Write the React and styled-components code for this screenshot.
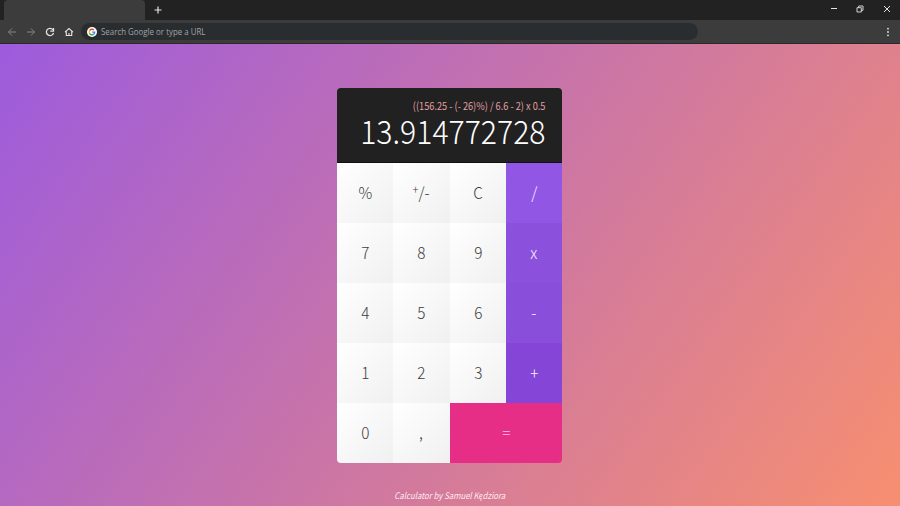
import React from "react";
import styled, { createGlobalStyle } from "styled-components";

const GlobalStyle = createGlobalStyle`
  * { box-sizing: border-box; }
  body { margin: 0; overflow: hidden; }
  button { font: inherit; border: 0; padding: 0; margin: 0; background: none; color: inherit; }
`;

const Browser = styled.div`
  display: flex;
  flex-direction: column;
  width: 900px;
  height: 506px;
  font-family: "Noto Sans CJK SC", "Noto Sans", sans-serif;
`;

const TitleBar = styled.header`
  display: flex;
  height: 20px;
  padding-left: 4px;
  background: #222;
`;

const Tab = styled.div`
  width: 141px;
  height: 20px;
  border-radius: 4px 4px 0 0;
  background: #3c3c3c;
`;

const NewTab = styled.button`
  display: flex;
  align-items: center;
  justify-content: center;
  width: 25px;
  height: 20px;
`;

const WindowControls = styled.div`
  display: flex;
  margin-left: auto;
`;

const WindowButton = styled.button`
  display: flex;
  align-items: center;
  justify-content: center;
  width: 26.6px;
  height: 18px;
`;

const Toolbar = styled.div`
  display: flex;
  align-items: center;
  height: 24px;
  padding: 0 3px 0 2px;
  background: #3c3c3c;
  border-bottom: 1px solid #2b292c;
`;

const ToolButton = styled.button`
  display: flex;
  align-items: center;
  justify-content: center;
  width: 19px;
  height: 20px;
`;

const AddressBar = styled.div`
  display: flex;
  align-items: center;
  gap: 4px;
  width: 617px;
  height: 17px;
  margin-left: 3px;
  padding-left: 6px;
  border-radius: 9px;
  background: #292d30;
`;

const AddressText = styled.span`
  color: #a0a4a7;
  font: 9.3px/17px "Open Sans", "Noto Sans", sans-serif;
  white-space: nowrap;
  transform: scaleX(0.85);
  transform-origin: left center;
`;

const MenuButton = styled(ToolButton)`
  margin-left: auto;
`;

const Page = styled.main`
  display: flex;
  flex-direction: column;
  align-items: center;
  flex: 1;
  padding: 44px 1px 0 0;
  background: linear-gradient(125deg, #9d5bdd 0%, #f78f70 100%);
`;

const Calculator = styled.section`
  width: 225px;
  height: 375px;
  border-radius: 4px;
  overflow: hidden;
`;

const Display = styled.div`
  display: flex;
  flex-direction: column;
  align-items: flex-end;
  height: 75px;
  padding: 9px 17px 0 0;
  background: #212121;
  border-bottom: 1px solid #101010;
`;

const Expression = styled.div`
  color: #e2a0a4;
  font-size: 10.6px;
  line-height: 17px;
  white-space: nowrap;
  transform: scaleX(0.87);
  transform-origin: right center;
`;

const Result = styled.div`
  color: #fff;
  font-size: 33px;
  font-weight: 300;
  line-height: 32px;
  transform: scaleX(0.915);
  transform-origin: right center;
`;

const Keypad = styled.div`
  display: grid;
  grid-template-columns: 56px 57px 56px 56px;
  grid-auto-rows: 60px;
`;

const Key = styled.button`
  display: flex;
  align-items: center;
  justify-content: center;
  padding-bottom: 2px;
  color: #3c3c3c;
  font-size: 16.3px;
  font-weight: 300;
  background: linear-gradient(135deg, #fff, #f0f0f0);
`;

const OperatorKey = styled(Key)`
  color: #fbf2ff;
  background: ${(p) => p.$shade};
`;

const EqualsKey = styled(Key)`
  grid-column: span 2;
  color: #fbc4e0;
  background: #e72e87;
`;

const KeyLabel = styled.span`
  display: flex;
  align-items: center;
  transform: scaleX(0.94);
`;

const Raised = styled.span`
  font-size: 12px;
  line-height: 10px;
  margin-bottom: 7px;
`;

const Credit = styled.footer`
  margin-top: 26px;
  color: #fdeaf0;
  font-size: 9px;
  line-height: 14px;
  font-style: italic;
  white-space: nowrap;
  transform: scaleX(0.87);
`;

function Stroke({ d, size = 10, color = "#e4e4e4", width = 1 }) {
  return (
    <svg width={size} height={size} viewBox="0 0 10 10" fill="none" stroke={color} strokeWidth={width}>
      <path d={d} />
    </svg>
  );
}

function GoogleLogo() {
  return (
    <svg width="10" height="10" viewBox="0 0 20 20" fill="none" strokeWidth="2.8">
      <circle cx="10" cy="10" r="10" fill="#fff" />
      <path d="M13.8 6.2A5.4 5.4 0 0 0 5.2 7.4" stroke="#ea4335" />
      <path d="M5.2 7.4a5.4 5.4 0 0 0 0 5.2" stroke="#fbbc05" />
      <path d="M5.2 12.6a5.4 5.4 0 0 0 8.5 1.4" stroke="#34a853" />
      <path d="M13.7 14a5.4 5.4 0 0 0 1.7-3.7H10.2" stroke="#4285f4" />
    </svg>
  );
}

const rows = [
  { keys: ["%", "±", "C"], operator: "/", shade: "#9157e4" },
  { keys: ["7", "8", "9"], operator: "x", shade: "#8b50dc" },
  { keys: ["4", "5", "6"], operator: "-", shade: "#8a4fda" },
  { keys: ["1", "2", "3"], operator: "+", shade: "#8546d7" },
];

export default function App() {
  return (
    <Browser>
      <GlobalStyle />
      <TitleBar>
        <Tab />
        <NewTab aria-label="New tab"><Stroke d="M5 1.5v7M1.5 5h7" width={1.2} /></NewTab>
        <WindowControls>
          <WindowButton aria-label="Minimize"><Stroke d="M2 4.5h6" /></WindowButton>
          <WindowButton aria-label="Restore"><Stroke d="M2 3.7h4.3v4.3H2zM3.7 3.7V2H8v4.3H6.3" width={0.9} /></WindowButton>
          <WindowButton aria-label="Close"><Stroke d="M2 2l6 6M8 2L2 8" /></WindowButton>
        </WindowControls>
      </TitleBar>
      <Toolbar>
        <ToolButton aria-label="Back"><Stroke d="M9 5H1.5M5 1.5L1.5 5 5 8.5" color="#858585" /></ToolButton>
        <ToolButton aria-label="Forward"><Stroke d="M1 5h7.5M5 1.5L8.5 5 5 8.5" color="#858585" /></ToolButton>
        <ToolButton aria-label="Reload"><Stroke d="M7.8 2.7A3.6 3.6 0 1 0 8.5 5.8M8.5 1v3.2H5.3" width={1.3} /></ToolButton>
        <ToolButton aria-label="Home"><Stroke d="M1 5.2L5 1.5l4 3.7M2.3 4.6v3.9h5.4V4.6M5 6v2.5" width={1.1} /></ToolButton>
        <AddressBar>
          <GoogleLogo />
          <AddressText>Search Google or type a URL</AddressText>
        </AddressBar>
        <MenuButton aria-label="Menu">
          <svg width="10" height="10" viewBox="0 0 10 10" fill="#e4e4e4">
            <circle cx="5" cy="1.7" r="0.9" />
            <circle cx="5" cy="5" r="0.9" />
            <circle cx="5" cy="8.3" r="0.9" />
          </svg>
        </MenuButton>
      </Toolbar>
      <Page>
        <Calculator>
          <Display>
            <Expression>((156.25 - (- 26)%) / 6.6 - 2) x 0.5</Expression>
            <Result>13.914772728</Result>
          </Display>
          <Keypad>
            {rows.map(({ keys, operator, shade }) => (
              <React.Fragment key={operator}>
                {keys.map((k) => (
                  <Key key={k}>
                    <KeyLabel>{k === "±" ? <><Raised>+</Raised>/-</> : k}</KeyLabel>
                  </Key>
                ))}
                <OperatorKey $shade={shade}><KeyLabel>{operator}</KeyLabel></OperatorKey>
              </React.Fragment>
            ))}
            <Key><KeyLabel>0</KeyLabel></Key>
            <Key><KeyLabel>,</KeyLabel></Key>
            <EqualsKey><KeyLabel>=</KeyLabel></EqualsKey>
          </Keypad>
        </Calculator>
        <Credit>Calculator by Samuel Kędziora</Credit>
      </Page>
    </Browser>
  );
}
